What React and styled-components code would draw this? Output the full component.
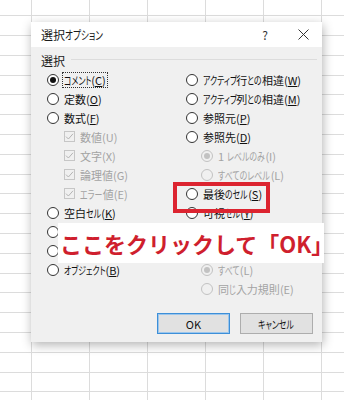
import React from 'react';
import styled, { createGlobalStyle } from 'styled-components';

const GlobalStyle = createGlobalStyle`
  body {
    margin: 0;
    font-family: "Noto Sans CJK JP", "Noto Sans", sans-serif;
    font-feature-settings: "palt";
  }
`;

// Spreadsheet backdrop with the grid lines
const Sheet = styled.div`
  position: relative;
  width: 344px;
  height: 400px;
  overflow: hidden;
  box-sizing: border-box;
  padding: 22px 0 0 31px;
  background-color: #fff;
  background-image:
    repeating-linear-gradient(to bottom, transparent 0, transparent 15.3px, #dcdcdc 15.3px, #dcdcdc 16.3px, transparent 16.3px, transparent 19.8px),
    repeating-linear-gradient(to right, transparent 0, transparent 31.5px, #dcdcdc 31.5px, #dcdcdc 32.5px, transparent 32.5px, transparent 57.8px);
`;

const Dialog = styled.div`
  width: 291px;
  height: 320px;
  background: #f0f0f0;
  box-shadow: 1px 3px 10px rgba(0, 0, 0, 0.3);
  display: flex;
  flex-direction: column;
`;

const TitleBar = styled.div`
  height: 25px;
  background: #fff;
  display: flex;
  align-items: center;
  padding-left: 10px;
  font-size: 12px;
  color: #1a1a1a;
`;

const TitleText = styled.span`
  flex: 1;
`;

const TitleButton = styled.span`
  width: 38px;
  display: flex;
  justify-content: center;
  align-items: center;
  font-size: 12px;
  color: #333;
`;

const Body = styled.div`
  flex: 1;
  display: flex;
  flex-direction: column;
  padding-top: 4px;
`;

const GroupHeader = styled.div`
  height: 18px;
  display: flex;
  align-items: center;
  padding: 0 5px 0 10px;
  font-size: 12px;
  color: #1a1a1a;
  &::after {
    content: '';
    flex: 1;
    height: 1px;
    background: #dcdcdc;
    margin-left: 6px;
    margin-top: -2px;
  }
`;

const Columns = styled.div`
  display: grid;
  grid-template-columns: 139px 1fr;
  padding-left: 16px;
  margin-top: 1px;
`;

const Column = styled.div`
  display: flex;
  flex-direction: column;
`;

const Row = styled.div`
  height: 19px;
  display: flex;
  align-items: center;
  gap: 4px;
  padding-left: ${p => p.$indent || 0}px;
  font-size: 11px;
  color: ${p => (p.$disabled ? '#a3a3a3' : '#111')};
  white-space: nowrap;
`;

// kana in the dialog font are much narrower than in Noto, squeeze them
const Kana = styled.span`
  display: inline-block;
  transform: scaleX(0.72);
  transform-origin: left center;
  margin-right: ${p => -p.$n * 0.25}em;
`;

const Radio = styled.span`
  width: 12px;
  height: 12px;
  box-sizing: border-box;
  border-radius: 50%;
  border: 1px solid ${p => (p.$disabled ? '#c2c2c2' : '#333')};
  background: ${p => (p.$disabled ? '#f0f0f0' : '#fff')};
  display: flex;
  align-items: center;
  justify-content: center;
  flex-shrink: 0;
  &::after {
    content: '';
    display: ${p => (p.$checked ? 'block' : 'none')};
    width: 6px;
    height: 6px;
    border-radius: 50%;
    background: ${p => (p.$disabled ? '#c2c2c2' : '#111')};
  }
`;

const Box = styled.span`
  width: 11px;
  height: 11px;
  box-sizing: border-box;
  border: 1px solid #c6c6c6;
  background: #f0f0f0;
  display: flex;
  align-items: center;
  justify-content: center;
  flex-shrink: 0;
`;

const Label = styled.span`
  padding: 0 1px;
  outline: ${p => (p.$focus ? '1px dotted #333' : 'none')};
  line-height: 14px;
`;

const Key = styled.span`
  text-decoration: ${p => (p.$disabled ? 'none' : 'underline')};
  text-underline-offset: 1px;
`;

const ButtonRow = styled.div`
  margin-top: auto;
  display: flex;
  justify-content: flex-end;
  gap: 10px;
  padding: 0 9px 8px 0;
`;

const Button = styled.div`
  width: 73px;
  height: 21px;
  box-sizing: border-box;
  border: 1px solid ${p => (p.$primary ? '#3d8fd8' : '#adadad')};
  box-shadow: ${p => (p.$primary ? 'inset 0 0 0 1px #9cc6ec' : 'none')};
  background: #e1e1e1;
  display: flex;
  align-items: center;
  justify-content: center;
  font-size: 11px;
  color: #111;
`;

const Banner = styled.div`
  position: absolute;
  left: 58px;
  top: 223px;
  width: 266px;
  height: 40px;
  background: #fff;
  display: flex;
  align-items: center;
  padding-left: 2px;
  box-sizing: border-box;
  font-size: 22px;
  font-weight: 700;
  color: #cf1f2e;
  font-feature-settings: normal;
  white-space: nowrap;
`;

const Highlight = styled.div`
  position: absolute;
  left: 173px;
  top: 182px;
  width: 97px;
  height: 31px;
  box-sizing: border-box;
  border: 4px solid #dc2430;
`;

const CheckMark = () => (
  <svg width="9" height="9" viewBox="0 0 9 9">
    <path d="M1 4.6 L3.4 7 L8 1.8" fill="none" stroke="#b4b4b4" strokeWidth="1" />
  </svg>
);

const CloseIcon = () => (
  <svg width="11" height="11" viewBox="0 0 11 11">
    <path d="M0.5 0.5 L10.5 10.5 M10.5 0.5 L0.5 10.5" stroke="#333" strokeWidth="1" />
  </svg>
);

const squeeze = text =>
  text.split(/([\u3040-\u30ff]+)/).map((part, i) =>
    /[\u3040-\u30ff]/.test(part) ? <Kana key={i} $n={part.length}>{part}</Kana> : part
  );

const leftItems = [
  { label: 'コメント', key: 'C', checked: true, focus: true },
  { label: '定数', key: 'O' },
  { label: '数式', key: 'F' },
  { type: 'check', label: '数値', key: 'U', disabled: true, indent: 17 },
  { type: 'check', label: '文字', key: 'X', disabled: true, indent: 17 },
  { type: 'check', label: '論理値', key: 'G', disabled: true, indent: 17 },
  { type: 'check', label: 'エラー値', key: 'E', disabled: true, indent: 17 },
  { label: '空白セル', key: 'K' },
  { label: 'アクティブ セル領域', key: 'R' },
  { label: '現在の配列', key: 'A' },
  { label: 'オブジェクト', key: 'B' },
];

const rightItems = [
  { label: 'アクティブ行との相違', key: 'W' },
  { label: 'アクティブ列との相違', key: 'M' },
  { label: '参照元', key: 'P' },
  { label: '参照先', key: 'D' },
  { label: '1 レベルのみ', key: 'I', disabled: true, checked: true, indent: 15 },
  { label: 'すべてのレベル', key: 'L', disabled: true, indent: 15 },
  { label: '最後のセル', key: 'S' },
  { label: '可視セル', key: 'Y' },
  { label: '条件付き書式', key: 'T' },
  { label: 'データの入力規則', key: 'V' },
  { label: 'すべて', key: 'L', disabled: true, checked: true, indent: 15 },
  { label: '同じ入力規則', key: 'E', disabled: true, indent: 15 },
];

const Option = ({ item }) => (
  <Row $disabled={item.disabled} $indent={item.indent}>
    {item.type === 'check' ? (
      <Box><CheckMark /></Box>
    ) : (
      <Radio $checked={item.checked} $disabled={item.disabled} />
    )}
    <Label $focus={item.focus}>
      {squeeze(item.label)}(<Key $disabled={item.disabled}>{item.key}</Key>)
    </Label>
  </Row>
);

const App = () => (
  <>
    <GlobalStyle />
    <Sheet>
      <Dialog>
        <TitleBar>
          <TitleText>{squeeze('選択オプション')}</TitleText>
          <TitleButton>?</TitleButton>
          <TitleButton><CloseIcon /></TitleButton>
        </TitleBar>
        <Body>
          <GroupHeader>選択</GroupHeader>
          <Columns>
            <Column>
              {leftItems.map((item, i) => <Option key={i} item={item} />)}
            </Column>
            <Column>
              {rightItems.map((item, i) => <Option key={i} item={item} />)}
            </Column>
          </Columns>
          <ButtonRow>
            <Button $primary>OK</Button>
            <Button>{squeeze('キャンセル')}</Button>
          </ButtonRow>
        </Body>
      </Dialog>
      <Highlight />
      <Banner>ここをクリックして「OK」</Banner>
    </Sheet>
  </>
);

export default App;
